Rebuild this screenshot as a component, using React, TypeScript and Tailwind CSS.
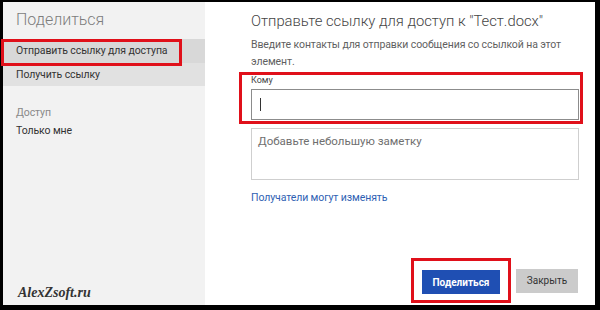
import React from 'react'

const font = { fontFamily: 'Roboto, "Noto Sans", Arial, sans-serif' }

export default function App() {
  return (
    <div className="w-[600px] h-[310px] bg-black pt-[2px] pl-[3px] pr-[5px] pb-[5px]" style={font}>
      <div className="flex h-full bg-white">
        {/* sidebar */}
        <aside className="relative flex w-[202px] shrink-0 flex-col bg-[#f2f2f2] text-[10.5px] tracking-[-0.1px]">
          <h2 className="h-[37px] pl-[13px] text-[16px] font-light leading-[36px] tracking-normal text-[#7d7d7d]">Поделиться</h2>
          <div className="relative h-[24px] bg-[#d8d8d8] pl-[13px] leading-[24px] text-[#333]">
            Отправить ссылку для доступа
            <div className="absolute -left-[2px] top-0 h-[27px] w-[181px] border-[3px] border-[#e0101a]" />
          </div>
          <div className="h-[23px] bg-[#e1e1e1] pl-[13px] leading-[23px] text-[#333]">Получить ссылку</div>
          <div className="mt-[18px] pl-[13px] leading-[18px] text-[#888]">Доступ</div>
          <div className="pl-[13px] leading-[18px] text-[#333]">Только мне</div>
          <div
            className="mt-auto pb-[3px] pl-[15px] text-[14px] font-bold italic leading-[18px] tracking-normal text-[#333]"
            style={{ fontFamily: '"Liberation Serif", "Times New Roman", serif' }}
          >
            AlexZsoft.ru
          </div>
        </aside>

        {/* main */}
        <main className="flex min-w-0 flex-1 flex-col pl-[46px] pr-[16px]">
          <h1 className="whitespace-nowrap pt-[7px] text-[14.8px] font-light leading-[24px] text-[#444]">
            Отправьте ссылку для доступ к "Тест.docx"
          </h1>
          <p className="mt-[3px] whitespace-nowrap text-[10.5px] leading-[17px] tracking-[-0.1px] text-[#5f5f5f]">
            Введите контакты для отправки сообщения со ссылкой на этот
            <br />
            элемент.
          </p>

          <div className="relative mt-[3px]">
            <div className="text-[9px] leading-[14px] text-[#444]">Кому</div>
            <div className="mt-[2px] flex h-[31px] items-center border border-[#8c8c8c] bg-white pl-[8px]">
              <span className="h-[13px] w-px bg-[#333]" />
            </div>
            <div className="absolute -bottom-[4px] -left-[12px] -right-[4px] -top-[1px] border-[3px] border-[#e0101a]" />
          </div>

          <div className="mt-[8px] h-[52px] border border-[#cfcfcf] px-[6px] pt-[4px] text-[11.5px] leading-[16px] text-[#6f6f6f]">
            Добавьте небольшую заметку
          </div>

          <div className="mt-[10px] text-[10.5px] leading-[16px] tracking-[-0.1px] text-[#2f5fb3]">Получатели могут изменять</div>

          <div className="mb-[11px] mt-auto flex justify-end gap-[16px] pr-px">
            <div className="relative">
              <button className="h-[24px] w-[78px] bg-[#1f4fb3] text-[10px] font-bold text-white">Поделиться</button>
              <div className="absolute -bottom-[9px] -left-[11px] -right-[11px] -top-[11px] border-[3px] border-[#e0101a]" />
            </div>
            <button className="h-[24px] w-[62px] bg-[#cbcbcb] text-[10px] text-[#333]">Закрыть</button>
          </div>
        </main>
      </div>
    </div>
  )
}
